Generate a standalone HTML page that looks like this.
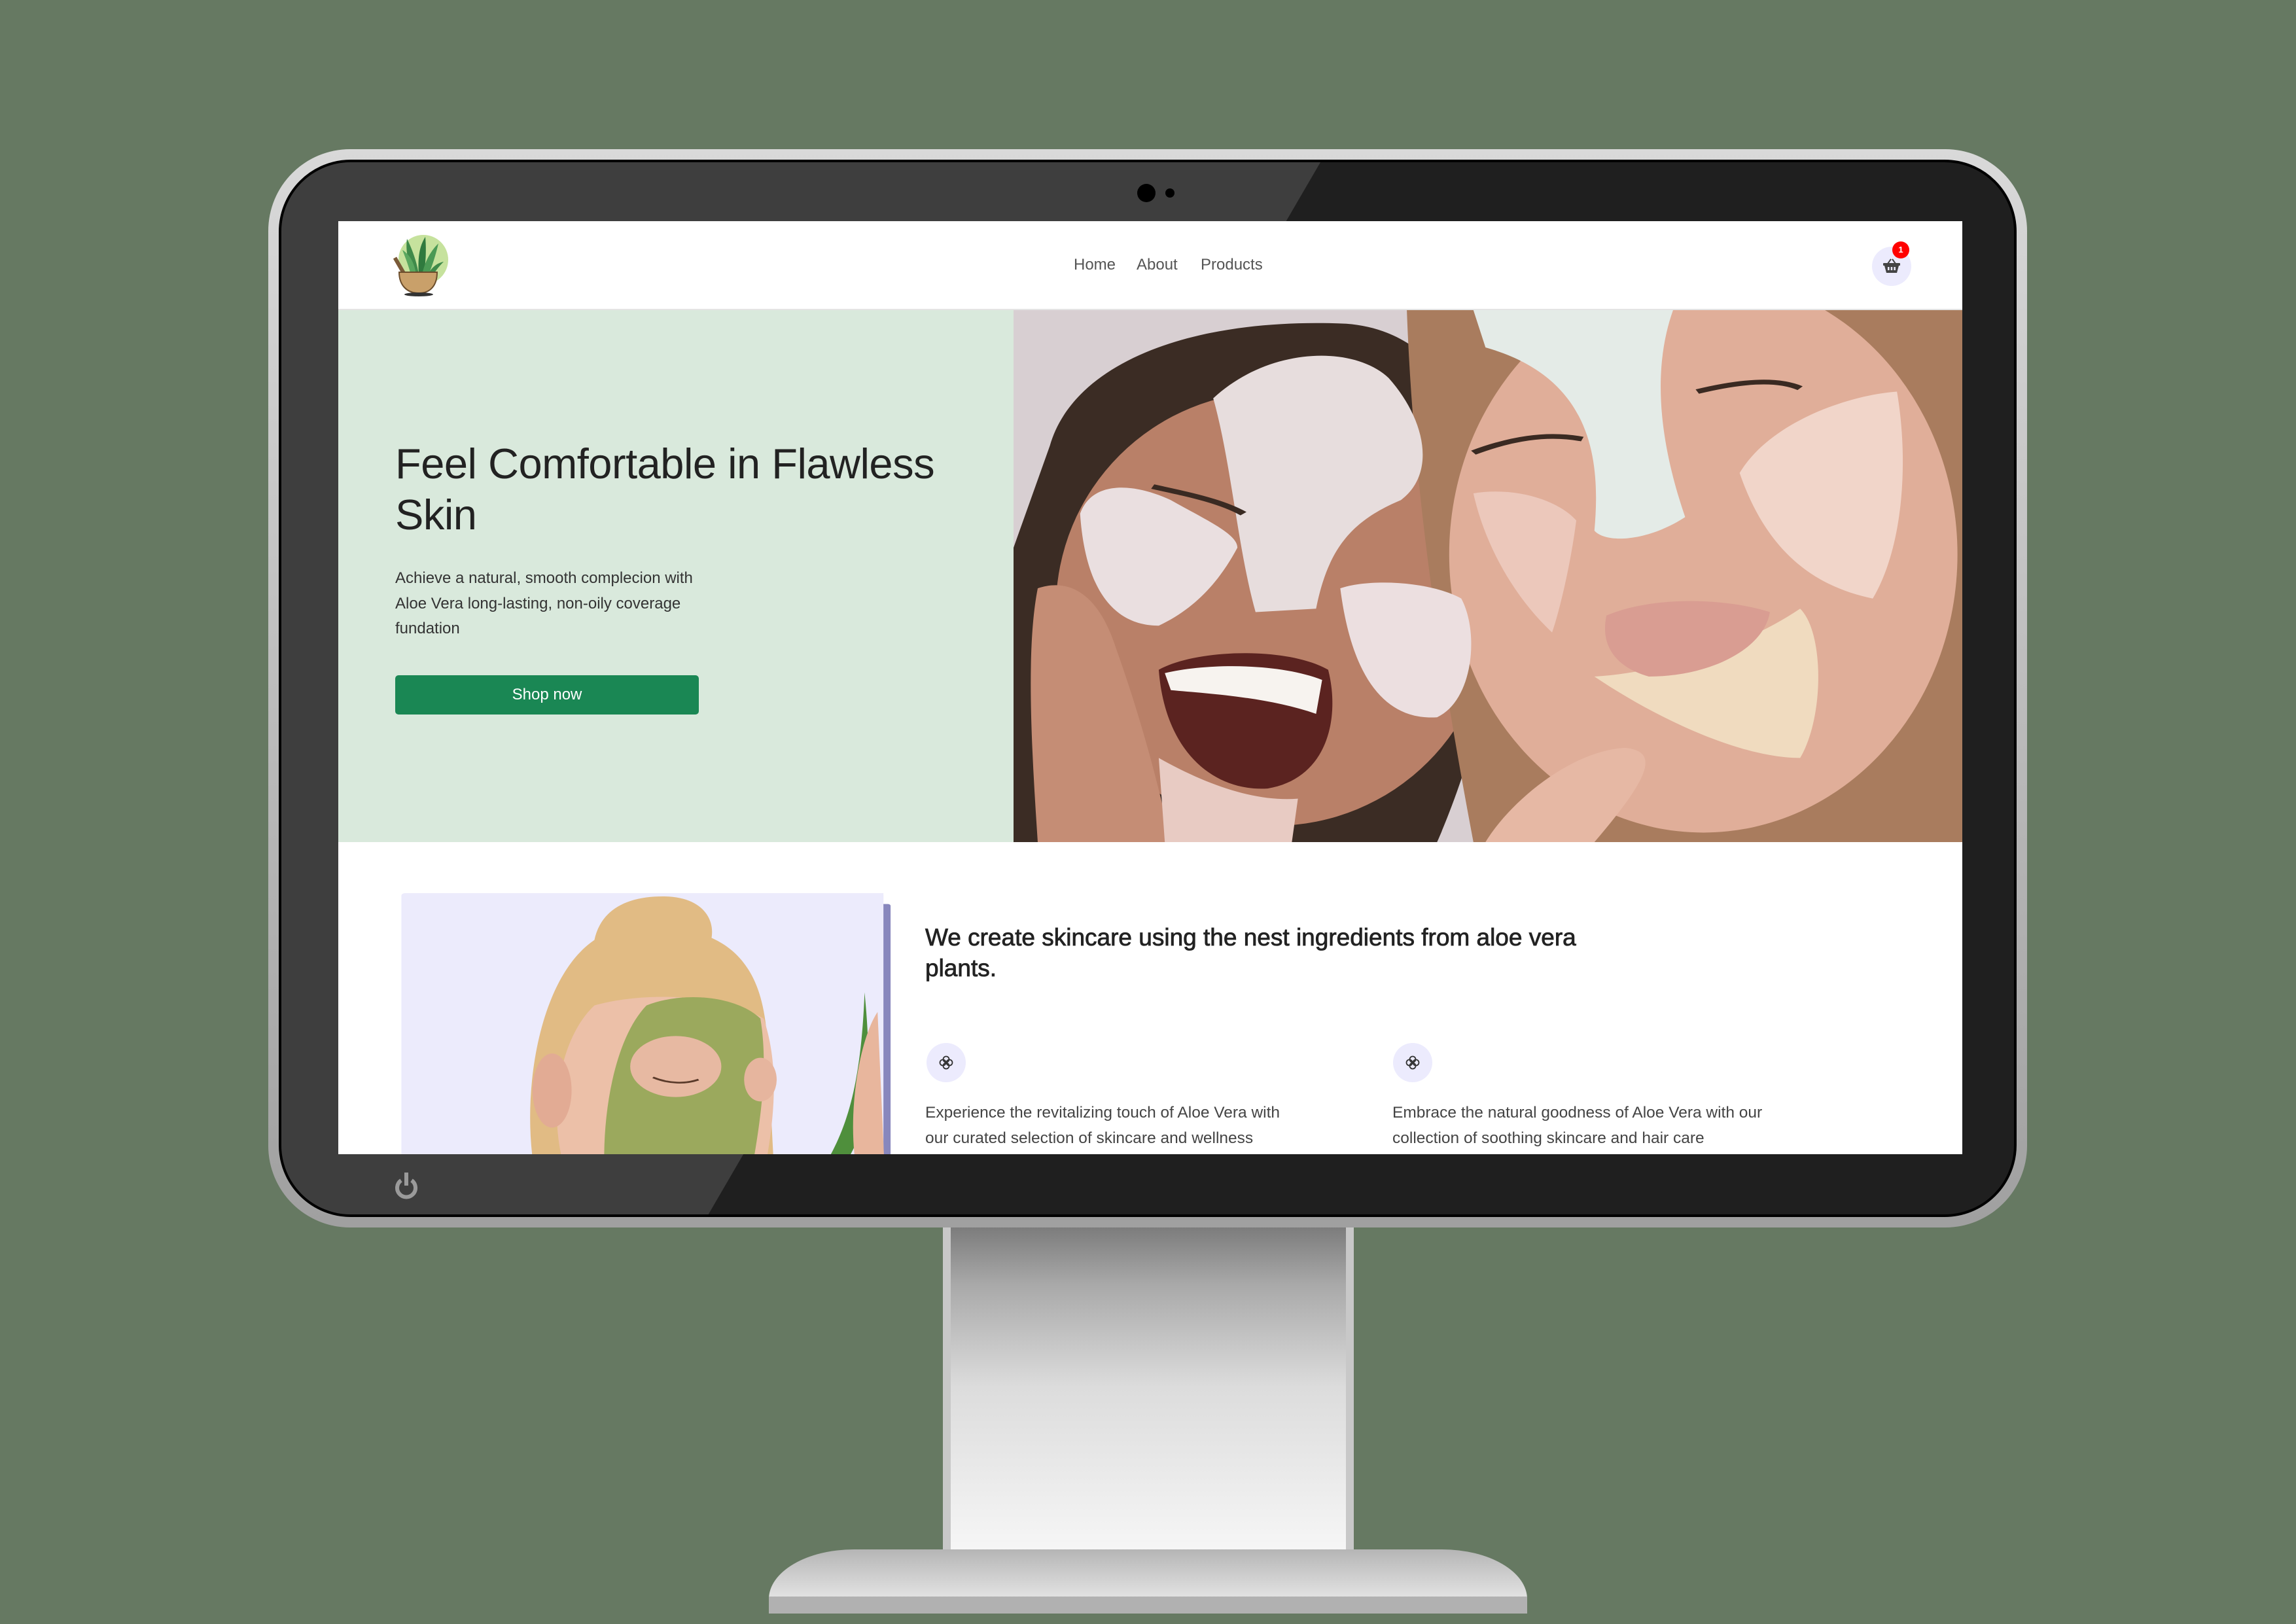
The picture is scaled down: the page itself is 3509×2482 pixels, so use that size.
<!DOCTYPE html>
<html><head><meta charset="utf-8"><style>
*{margin:0;padding:0;box-sizing:border-box}
html,body{width:3509px;height:2482px;overflow:hidden;background:#667962;font-family:"Liberation Sans","DejaVu Sans",sans-serif}
.abs{position:absolute}
#stand{left:1441px;top:1860px;width:628px;height:520px;background:#c8c8c8}
#standin{left:12px;top:0;right:12px;bottom:0;background:linear-gradient(#747474 0%,#a9a9a9 20%,#dcdcdc 50%,#f7f7f7 100%)}
#base{left:1175px;top:2368px;width:1159px;height:76px;border-radius:130px 130px 0 0/76px 76px 0 0;background:linear-gradient(#b5b5b5,#e4e4e4)}
#basestrip{left:1175px;top:2440px;width:1159px;height:26px;background:#b1b1b1}
#frame{left:410px;top:228px;width:2688px;height:1648px;border-radius:125px;background:linear-gradient(180deg,#d9d9d9,#a0a0a0);}
#bezel{left:426px;top:244px;width:2656px;height:1616px;border-radius:110px;background:#1f1f1f;overflow:hidden;border:4px solid #000}
#shine{left:0;top:0;width:100%;height:100%;background:#3e3e3e;clip-path:polygon(0 0,1588px 0,648px 1616px,0 1616px)}
#screen{left:517px;top:338px;width:2482px;height:1426px;background:#fff;overflow:hidden}
.nav a{position:absolute;top:53px;font-size:24px;color:#555;text-decoration:none}
h1{position:absolute;left:87px;top:332px;font-size:65px;font-weight:400;line-height:78px;color:#222;letter-spacing:-0.5px}
.p{position:absolute;font-size:24px;line-height:38.5px;color:#333}
.btn{position:absolute;left:87px;top:694px;width:464px;height:60px;background:#1a8754;border-radius:5px;color:#fff;font-size:24px;text-align:center;line-height:60px}
h2{position:absolute;left:897px;top:1071px;font-size:37px;line-height:47px;font-weight:400;-webkit-text-stroke:0.8px #222;color:#222;width:1200px}
.ic{position:absolute;width:60px;height:60px;border-radius:50%;background:#ecebfd}
</style></head><body>
<div id="stand" class="abs"><div id="standin" class="abs"></div></div>
<div id="base" class="abs"></div><div id="basestrip" class="abs"></div>
<div id="frame" class="abs"></div>
<div id="bezel" class="abs"><div id="shine" class="abs"></div></div>
<div class="abs" style="left:1738px;top:281px;width:28px;height:28px;border-radius:50%;background:#000"></div>
<div class="abs" style="left:1781px;top:288px;width:14px;height:14px;border-radius:50%;background:#000"></div>
<svg class="abs" style="left:598px;top:1788px" width="46" height="46" viewBox="0 0 46 46"><path d="M15 16 A14 14 0 1 0 31 16" fill="none" stroke="#9a9a9a" stroke-width="6"/><rect x="20" y="4" width="6" height="20" fill="#9a9a9a"/></svg>

<div id="screen" class="abs">
 <div class="abs" style="left:0;top:0;width:2482px;height:136px;background:#fff;border-bottom:2px solid #e4e4e4"></div>
 <svg class="abs" style="left:73px;top:12px" width="110" height="115" viewBox="0 0 110 115">
  <circle cx="57" cy="47" r="38" fill="#c6e29d"/>
  <path d="M40 70 C32 45 30 30 32 15 C42 35 48 55 50 70Z" fill="#3f8a4a"/>
  <path d="M50 70 C48 40 52 25 60 12 C62 35 60 55 58 70Z" fill="#2f7a3e"/>
  <path d="M55 70 C60 45 72 30 80 22 C76 40 70 58 64 72Z" fill="#4b9a55"/>
  <path d="M25 32 C38 40 44 55 46 70 L38 70 C34 55 30 45 25 32Z" fill="#5aa75f"/>
  <path d="M62 72 C70 58 78 52 88 50 C80 58 74 66 70 74Z" fill="#3f8a4a"/>
  <rect x="18" y="42" width="6" height="30" fill="#7a5a38" transform="rotate(-30 21 57)"/>
  <path d="M20 66 L78 66 C78 86 68 98 50 98 C32 98 20 86 20 66Z" fill="#c9a06a" stroke="#6b4d2c" stroke-width="2"/>
  <ellipse cx="50" cy="100" rx="22" ry="3" fill="#333"/>
 </svg>
 <div class="nav"><a style="left:1124px">Home</a><a style="left:1220px">About</a><a style="left:1318px">Products</a></div>
 <div class="abs" style="left:2344px;top:39px;width:60px;height:60px;border-radius:50%;background:#ecebfd"></div>
 <svg class="abs" style="left:2360px;top:56px" width="28" height="24" viewBox="0 0 28 24"><path d="M8 9 L13 2 M20 9 L15 2" stroke="#444" stroke-width="2" fill="none"/><rect x="1" y="8" width="26" height="4" rx="1" fill="#444"/><path d="M3 12 L25 12 L22 23 L6 23Z" fill="#444"/><rect x="8" y="14" width="2.5" height="5" fill="#ecebfd"/><rect x="12.7" y="14" width="2.5" height="5" fill="#ecebfd"/><rect x="17.4" y="14" width="2.5" height="5" fill="#ecebfd"/></svg>
 <div class="abs" style="left:2375px;top:31px;width:26px;height:26px;border-radius:50%;background:#f00;color:#fff;font-size:13px;font-weight:bold;text-align:center;line-height:26px">1</div>

 <div class="abs" style="left:0;top:136px;width:1032px;height:813px;background:#d9e9dc"></div>
 <h1>Feel Comfortable in Flawless<br>Skin</h1>
 <div class="p" style="left:87px;top:527px;width:560px">Achieve a natural, smooth complecion with<br>Aloe Vera long-lasting, non-oily coverage<br>fundation</div>
 <div class="btn">Shop now</div>

 <svg class="abs" style="left:1032px;top:136px" width="1450" height="813" viewBox="0 0 1568 1568" preserveAspectRatio="none">
  <rect width="1568" height="1568" fill="#d8cfd2"/>
  <path d="M60 400 C100 150 300 20 550 40 C700 60 780 300 800 700 C820 1100 700 1568 700 1568 L0 1568 L0 700Z" fill="#3b2c24"/>
  <ellipse cx="430" cy="880" rx="360" ry="640" fill="#b98068"/>
  <path d="M650 0 L1568 0 L1568 1568 L760 1568 C700 1000 660 500 650 0Z" fill="#a97c5e"/>
  <ellipse cx="1140" cy="720" rx="420" ry="820" fill="#e0ae99"/>
  <path d="M330 260 C420 110 560 100 620 200 C680 320 700 480 640 560 C560 620 520 700 500 880 L400 890 C370 700 360 450 330 260Z" fill="#e7dddd"/>
  <path d="M110 600 C130 500 200 510 260 560 C320 620 370 660 370 700 C340 800 300 880 240 930 C180 930 120 860 110 600Z" fill="#eadfe0"/>
  <path d="M540 820 C590 790 690 800 740 850 C770 950 760 1150 700 1200 C620 1210 560 1100 540 820Z" fill="#ecdfe0"/>
  <path d="M760 0 L1090 0 C1060 150 1060 350 1110 610 C1050 680 980 690 960 650 C970 450 960 200 780 110Z" fill="#e4ebe7"/>
  <path d="M1200 480 C1250 330 1380 250 1460 240 C1480 450 1470 700 1420 850 C1340 820 1250 740 1200 480Z" fill="#f1d5c9"/>
  <path d="M760 540 C830 520 900 560 930 620 C920 760 900 900 890 950 C830 850 780 700 760 540Z" fill="#ecc8bb"/>
  <path d="M960 1080 C1060 1070 1200 1000 1300 880 C1340 950 1340 1200 1300 1320 C1200 1320 1060 1200 960 1080Z" fill="#f0dbbf"/>
  <path d="M240 1060 C300 1000 450 990 520 1060 C540 1200 520 1380 420 1410 C330 1420 250 1300 240 1060Z" fill="#5b2320"/>
  <path d="M250 1070 C320 1040 440 1040 510 1090 L500 1190 C420 1140 320 1130 260 1120Z" fill="#f7f3ef"/>
  <path d="M980 900 C1060 840 1180 850 1250 890 C1240 1000 1150 1080 1050 1080 C990 1050 970 980 980 900Z" fill="#d99d92"/>
  <path d="M40 820 C90 790 140 830 170 1000 C210 1200 240 1400 260 1568 L40 1568 C30 1300 20 1000 40 820Z" fill="#c58d75"/>
  <path d="M780 1568 C820 1450 920 1300 1010 1290 C1070 1300 1050 1380 960 1568Z" fill="#e6b8a4"/>
  <path d="M240 1320 C320 1400 400 1450 470 1440 L460 1568 L250 1568Z" fill="#e8cbc3"/>
  <path d="M230 520 C280 540 340 560 380 600 M760 420 C820 380 880 360 940 380 M1130 240 C1200 210 1260 200 1300 230" stroke="#3a2a22" stroke-width="14" fill="none"/>
 </svg>

 <svg class="abs" style="left:83px;top:1012px" width="780" height="420" viewBox="0 0 1568 1260" preserveAspectRatio="none">
  <rect x="27" y="45" width="1481" height="1300" rx="12" fill="#ecebfc"/>
  <rect x="1496" y="95" width="34" height="1200" rx="8" fill="#8887bd"/>
  <rect x="1481" y="45" width="27" height="1300" fill="#ecebfc"/>
  <path d="M430 1260 C400 900 460 420 620 260 C640 120 720 60 830 60 C950 60 990 160 980 250 C1100 330 1140 500 1150 700 L1170 1260Z" fill="#e1bb84"/>
  <path d="M520 1260 C480 1000 520 700 620 560 C760 500 1000 500 1140 620 C1180 800 1180 1000 1150 1260Z" fill="#ecc0a8"/>
  <ellipse cx="490" cy="950" rx="60" ry="170" fill="#e2ab94"/>
  <path d="M650 1260 C650 1000 690 700 780 560 C900 490 1060 520 1130 620 C1150 800 1140 1000 1110 1260Z" fill="#9ba95d"/>
  <ellipse cx="870" cy="840" rx="140" ry="140" fill="#e7b9a2"/>
  <path d="M800 890 C850 920 900 920 940 900" stroke="#5a3a2a" stroke-width="8" fill="none"/>
  <ellipse cx="1130" cy="900" rx="50" ry="100" fill="#e6b59e"/>
  <path d="M1340 1260 C1400 1100 1440 900 1450 500 C1470 800 1470 1100 1400 1260Z" fill="#4f8f3c"/>
  <path d="M1420 1260 C1400 1000 1440 700 1490 590 L1510 1260Z" fill="#e8b69d"/>
 </svg>

 <h2>We create skincare using the nest ingredients from aloe vera<br>plants.</h2>
 <div class="ic" style="left:899px;top:1256px"></div>
 <div class="ic" style="left:1612px;top:1256px"></div>
 <svg class="abs" style="left:915px;top:1272px" width="28" height="28" viewBox="0 0 28 28"><g fill="none" stroke="#333" stroke-width="1.8"><circle cx="14" cy="9" r="4.5"/><circle cx="14" cy="19" r="4.5"/><circle cx="9" cy="14" r="4.5"/><circle cx="19" cy="14" r="4.5"/></g><rect x="12" y="12" width="4" height="4" fill="#333"/></svg>
 <svg class="abs" style="left:1628px;top:1272px" width="28" height="28" viewBox="0 0 28 28"><g fill="none" stroke="#333" stroke-width="1.8"><circle cx="14" cy="9" r="4.5"/><circle cx="14" cy="19" r="4.5"/><circle cx="9" cy="14" r="4.5"/><circle cx="19" cy="14" r="4.5"/></g><rect x="12" y="12" width="4" height="4" fill="#333"/></svg>
 <div class="p" style="left:897px;top:1344px;width:700px;font-size:24.5px;color:#444">Experience the revitalizing touch of Aloe Vera with<br>our curated selection of skincare and wellness</div>
 <div class="p" style="left:1611px;top:1344px;width:750px;font-size:24.5px;color:#444">Embrace the natural goodness of Aloe Vera with our<br>collection of soothing skincare and hair care</div>
</div>
</body></html>
